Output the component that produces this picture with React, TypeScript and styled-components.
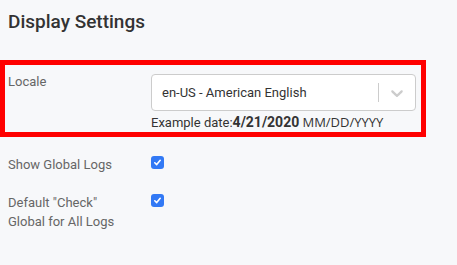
import styled, { createGlobalStyle } from "styled-components";

const GlobalStyle = createGlobalStyle`
  body {
    margin: 0;
    background: #f7f8fa;
    font-family: Roboto, "Liberation Sans", sans-serif;
  }
`;

const Page = styled.div`
  padding-top: 10px;
  width: 457px;
  height: 265px;
  box-sizing: border-box;
  overflow: hidden;
`;

const Title = styled.h2`
  margin: 0 0 26px;
  padding-left: 8px;
  font-size: 19px;
  line-height: 24px;
  font-weight: 500;
  color: #333;
`;

const Row = styled.div<{ $highlight?: boolean }>`
  display: grid;
  grid-template-columns: 143px 1fr;
  align-items: start;
  box-sizing: border-box;
  width: 426px;
  padding: ${(p) => (p.$highlight ? "9px 5px 0 3px" : "0 0 0 8px")};
  border: ${(p) => (p.$highlight ? "5px solid #ff0000" : "none")};
  height: ${(p) => (p.$highlight ? "77px" : "auto")};
  margin-bottom: ${(p) => (p.$highlight ? "18px" : "19px")};
`;

const Label = styled.div<{ $tall?: boolean }>`
  max-width: 122px;
  font-size: 13px;
  line-height: ${(p) => (p.$tall ? "19px" : "16px")};
  color: #666;
`;

const Control = styled.div`
  display: flex;
  flex-direction: column;
`;

const Select = styled.div`
  display: flex;
  align-items: center;
  box-sizing: border-box;
  width: 265px;
  height: 37px;
  background: #fff;
  border: 1px solid #cccccc;
  border-radius: 4px;
`;

const Value = styled.div`
  flex: 1;
  padding: 0 10px;
  font-size: 13px;
  color: #333;
`;

const Separator = styled.span`
  align-self: stretch;
  width: 1px;
  margin: 8px 0;
  background: #cccccc;
`;

const Indicator = styled.div`
  display: flex;
  padding: 8px;
  color: #cccccc;
`;

const Example = styled.div`
  margin-top: 3px;
  font-size: 13px;
  line-height: 16px;
  color: #333;
  white-space: nowrap;
`;

const DateValue = styled.b`
  font-size: 14px;
  font-weight: 700;
`;

const Format = styled.span`
  font-family: "Open Sans", Roboto, sans-serif;
  font-size: 13px;
`;

const Check = styled.span`
  display: flex;
  align-items: center;
  justify-content: center;
  width: 13px;
  height: 13px;
  margin-top: 1px;
  border-radius: 3px;
  background: #3279f5;
`;

const CheckBox = () => (
  <Check>
    <svg width="9" height="9" viewBox="0 0 10 10">
      <path
        d="M2 5.3 L4.1 7.3 L8 2.6"
        fill="none"
        stroke="#fff"
        strokeWidth="1.8"
        strokeLinecap="round"
        strokeLinejoin="round"
      />
    </svg>
  </Check>
);

const Chevron = () => (
  <svg width="20" height="20" viewBox="0 0 20 20" fill="currentColor">
    <path d="M4.516 7.548c0.436-0.446 1.043-0.481 1.576 0l3.908 3.747 3.908-3.747c0.533-0.481 1.141-0.446 1.574 0 0.436 0.445 0.408 1.197 0 1.615-0.406 0.418-4.695 4.502-4.695 4.502-0.217 0.223-0.502 0.335-0.787 0.335s-0.57-0.112-0.789-0.335c0 0-4.287-4.084-4.695-4.502s-0.436-1.17 0-1.615z" />
  </svg>
);

const App: React.FC = () => {
  return (
    <Page>
      <GlobalStyle />
      <Title>Display Settings</Title>
      <Row $highlight>
        <Label>Locale</Label>
        <Control>
          <Select>
            <Value>en-US - American English</Value>
            <Separator />
            <Indicator>
              <Chevron />
            </Indicator>
          </Select>
          <Example>
            Example date:<DateValue>4/21/2020</DateValue>{" "}
            <Format>MM/DD/YYYY</Format>
          </Example>
        </Control>
      </Row>
      <Row>
        <Label $tall>Show Global Logs</Label>
        <CheckBox />
      </Row>
      <Row>
        <Label $tall>Default "Check" Global for All Logs</Label>
        <CheckBox />
      </Row>
    </Page>
  );
};

export default App;
